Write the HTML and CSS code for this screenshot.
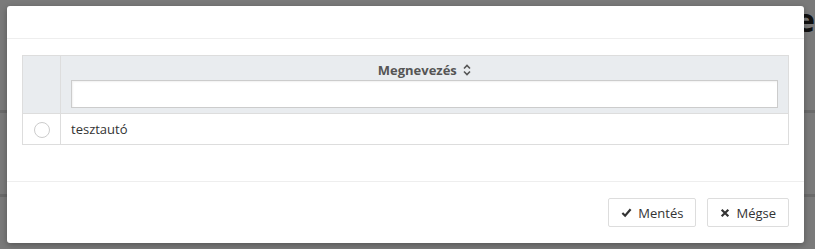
FILE: index.html
```html
<!DOCTYPE html>
<html lang="hu">
<head>
    <meta charset="UTF-8">
    <title>Választás</title>
    <link rel="stylesheet" href="styles.css">
</head>
<body>
    <!-- page behind the dialog -->
    <div class="page">
        <h1 class="page-title">Járművek nyilvántartása – Gépjárműve</h1>
        <div class="page-line line-a"></div>
        <div class="page-line line-b"></div>
    </div>

    <div class="backdrop"></div>

    <div class="modal">
        <div class="modal-header"></div>
        <div class="modal-body">
            <table class="grid">
                <thead>
                    <tr>
                        <th class="col-select"></th>
                        <th class="col-name">
                            <div class="th-label">Megnevezés
                                <svg class="sort-icon" viewBox="0 0 8 12" width="8" height="12">
                                    <path d="M1 4.5 L4 1.5 L7 4.5 M1 7.5 L4 10.5 L7 7.5" fill="none" stroke="#555" stroke-width="1.6"/>
                                </svg>
                            </div>
                            <input type="text" class="filter-input">
                        </th>
                    </tr>
                </thead>
                <tbody>
                    <tr>
                        <td class="col-select"><span class="radio"></span></td>
                        <td>tesztautó</td>
                    </tr>
                </tbody>
            </table>
        </div>
        <div class="modal-footer">
            <button class="btn">
                <svg viewBox="0 0 12 12" width="11" height="11"><path d="M1.5 6.5 L4.5 9.5 L10.5 2.5" fill="none" stroke="#333" stroke-width="2.4"/></svg>
                Mentés
            </button>
            <button class="btn">
                <svg viewBox="0 0 12 12" width="10" height="10"><path d="M2 2 L10 10 M10 2 L2 10" fill="none" stroke="#333" stroke-width="2.6"/></svg>
                Mégse
            </button>
        </div>
    </div>
</body>
</html>
```

FILE: styles.css
```css
body {
    margin: 0;
    font-family: "Open Sans", "Liberation Sans", sans-serif;
    font-size: 13px;
    color: #333;
    width: 815px;
    height: 249px;
    overflow: hidden;
    background: #fff;
}
.page {
    position: relative;
    height: 249px;
}
.page-title {
    margin: 0;
    padding: 0;
    font-size: 32px;
    line-height: 40px;
    font-weight: 700;
    white-space: nowrap;
    text-align: right;
    color: #222;
}
.page-line {
    position: absolute;
    left: 0;
    right: 0;
    height: 3px;
    background: #ddd;
}
.line-a { top: 110px; }
.line-b { top: 194px; }
.backdrop {
    position: absolute;
    inset: 0;
    background: rgba(0, 0, 0, 0.52);
}
.modal {
    position: absolute;
    left: 7px;
    top: 6px;
    width: 797px;
    height: 237px;
    background: #fff;
    border-radius: 3px;
    box-shadow: 0 2px 6px rgba(0, 0, 0, 0.3);
    display: flex;
    flex-direction: column;
}
.modal-header {
    height: 32px;
    border-bottom: 1px solid #eee;
}
.modal-body {
    padding: 16px 15px 0 15px;
    height: 126px;
    box-sizing: border-box;
}
.grid {
    width: 100%;
    border-collapse: collapse;
    border: 1px solid #ddd;
}
.grid th {
    background: #e9ecef;
    border-left: 1px solid #ddd;
    padding: 0 10px 5px 10px;
    text-align: center;
    font-weight: 700;
    color: #555;
    vertical-align: top;
}
.grid td {
    border-top: 1px solid #ddd;
    border-left: 1px solid #ddd;
    padding: 0 10px;
    height: 30px;
}
.grid .col-select {
    width: 37px;
    padding: 0;
    text-align: center;
}
.th-label {
    height: 24px;
    line-height: 28px;
}
.sort-icon {
    margin-left: 3px;
    vertical-align: -1px;
}
.filter-input {
    display: block;
    width: 100%;
    height: 28px;
    box-sizing: border-box;
    border: 1px solid #ccc;
    background: #fff;
    box-shadow: inset 1px 1px 2px rgba(0, 0, 0, 0.06);
}
.radio {
    display: inline-block;
    width: 14px;
    height: 14px;
    border: 1px solid #ccc;
    border-radius: 50%;
    vertical-align: middle;
}
.modal-footer {
    margin-top: auto;
    border-top: 1px solid #eee;
    height: 62px;
    box-sizing: border-box;
    padding: 0 15px 0 0;
    display: flex;
    justify-content: flex-end;
    align-items: center;
    gap: 11px;
}
.btn {
    font-family: inherit;
    font-size: 13px;
    color: #333;
    background: #fff;
    border: 1px solid #ddd;
    border-radius: 2px;
    height: 29px;
    padding: 0 12px;
    display: flex;
    align-items: center;
    gap: 6px;
}
```
